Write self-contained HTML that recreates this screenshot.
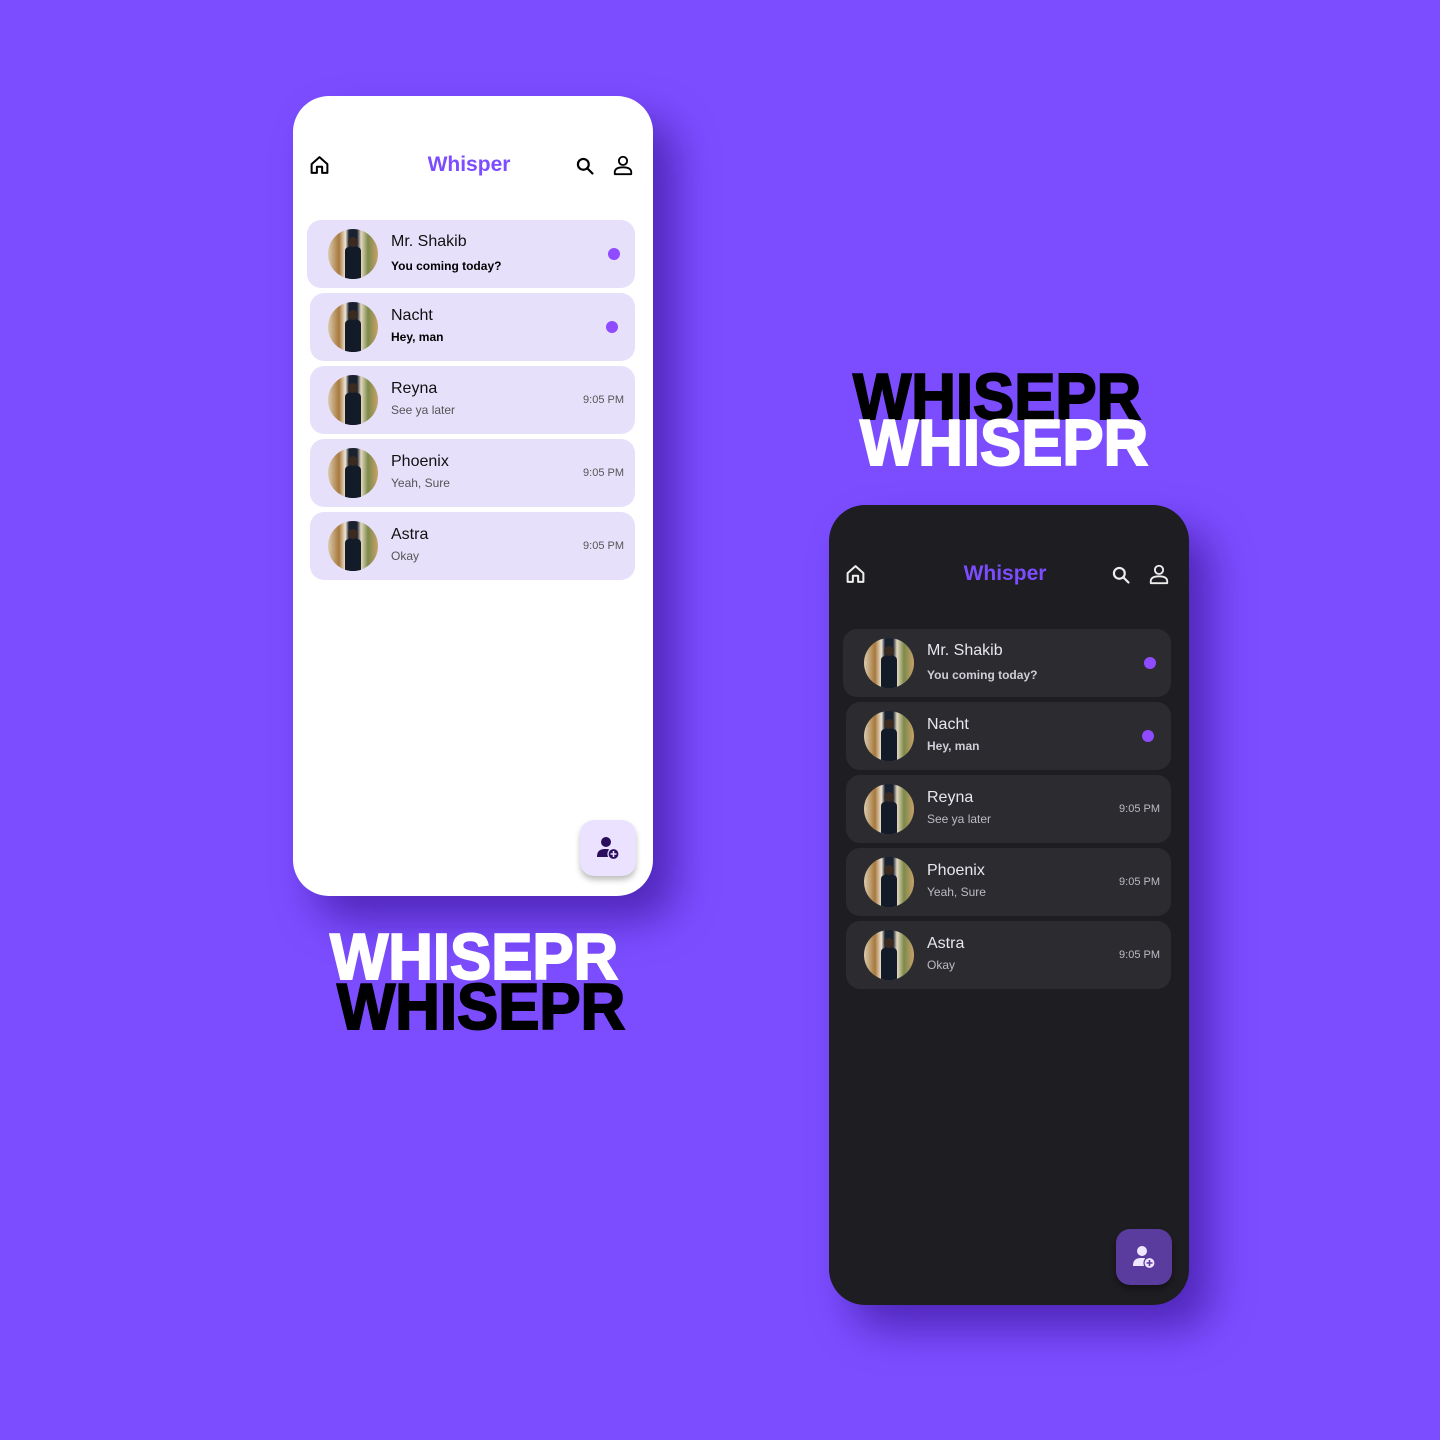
<!DOCTYPE html>
<html><head><meta charset="utf-8"><style>
*{margin:0;padding:0;box-sizing:border-box}
body{width:1440px;height:1440px;background:#7b4dff;position:relative;overflow:hidden;font-family:"Liberation Sans",sans-serif}
.phone{position:absolute;width:360px;height:800px;border-radius:36px;box-shadow:22px 24px 40px rgba(45,10,130,.55)}
.light{left:293px;top:96px;background:#fff;color:#111}
.dark{left:829px;top:505px;background:#1e1d21;color:#e8e6ee}
.ic{position:absolute;top:58px}
.title{position:absolute;left:0;width:352px;top:57px;text-align:center;font-weight:bold;font-size:21px;color:#7c4dff}
.row{position:absolute;left:17px;width:325px;height:68px;border-radius:14px}
.light .row{background:#e7e0fb}
.dark .row{background:#2c2b30}
.row.first{left:14px;width:328px}
.av{position:absolute;left:18px;top:9px;width:50px;height:50px;border-radius:50%;overflow:hidden;
background:linear-gradient(90deg,#d9cbb0 0%,#a7793d 22%,#efe6d6 35%,#1a2230 42%,#1a2230 58%,#e4d8c2 66%,#7d8a4a 80%,#c9a26a 100%)}
.av:after{content:"";position:absolute;left:20px;top:8px;width:10px;height:10px;border-radius:50%;background:#3a2a20}
.av:before{content:"";position:absolute;left:17px;top:18px;width:16px;height:32px;background:#141b28;border-radius:4px 4px 0 0}
.first .av{left:21px}
.nm{position:absolute;left:81px;top:14px;font-size:16px}
.first .nm{left:84px;top:13px}
.sb{position:absolute;left:81px;top:37px;font-size:12px}
.first .sb{left:84px;top:39px}
.b{font-weight:bold}
.light .sb{color:#555}.light .sb.b{color:#000}
.dark .sb{color:#bdbac4}.dark .sb.b{color:#d0cdd6}
.dot{position:absolute;right:17px;top:28px;width:12px;height:12px;border-radius:50%;background:#8f4bff}
.first .dot{right:15px}
.tm{position:absolute;right:11px;top:28px;font-size:11px}
.light .tm{color:#555}.dark .tm{color:#bdbac4}
.fab{position:absolute;left:287px;top:724px;width:56px;height:56px;border-radius:14px;display:flex;align-items:center;justify-content:center}
.light .fab{background:#ebe2ff;box-shadow:0 4px 6px rgba(0,0,0,.25)}
.dark .fab{background:#5a3b9e;box-shadow:0 4px 6px rgba(0,0,0,.35)}
.big{position:absolute;font-size:65px;line-height:65px;font-weight:900;transform:scaleX(.95);transform-origin:0 0;letter-spacing:0}
</style></head><body>

<div class="phone light">
 <svg class="ic" style="left:16px" width="21" height="22" viewBox="0 0 24 24" fill="none" stroke="#000" stroke-width="2.3" stroke-linejoin="round"><path d="M3 11 L12 3 L21 11 V21 H15 V14 H9 V21 H3 Z"/></svg>
 <div class="title">Whisper</div>
 <svg class="ic" style="left:282px;top:60px" width="20" height="20" viewBox="0 0 24 24" fill="none" stroke="#000" stroke-width="2.6" stroke-linecap="round"><circle cx="10" cy="10" r="6.5"/><path d="M15 15 L21 21"/></svg>
 <svg class="ic" style="left:319px" width="22" height="22" viewBox="0 0 24 24" fill="none" stroke="#000" stroke-width="2"><circle cx="12" cy="7.5" r="4.5"/><path d="M3 22 V20 C3 16 7 14.5 12 14.5 C17 14.5 21 16 21 20 V22 Z" stroke-linejoin="round"/></svg>
 <div class="row first" style="top:124px"><div class="av"></div><div class="nm">Mr. Shakib</div><div class="sb b">You coming today?</div><div class="dot"></div></div>
 <div class="row" style="top:197px"><div class="av"></div><div class="nm">Nacht</div><div class="sb b">Hey, man</div><div class="dot"></div></div>
 <div class="row" style="top:270px"><div class="av"></div><div class="nm">Reyna</div><div class="sb">See ya later</div><div class="tm">9:05 PM</div></div>
 <div class="row" style="top:343px"><div class="av"></div><div class="nm">Phoenix</div><div class="sb">Yeah, Sure</div><div class="tm">9:05 PM</div></div>
 <div class="row" style="top:416px"><div class="av"></div><div class="nm">Astra</div><div class="sb">Okay</div><div class="tm">9:05 PM</div></div>
 <div class="fab"><svg width="26" height="26" viewBox="0 0 26 26"><circle cx="11" cy="7" r="5" fill="#2a0d5c"/><path d="M2 22 C2 15 6 14 11 14 C13 14 14 14.3 15 14.8 L15 22 Z" fill="#2a0d5c"/><circle cx="18.5" cy="19" r="5.5" fill="#2a0d5c" stroke="#ebe2ff" stroke-width="1.2"/><path d="M18.5 16 V22 M15.5 19 H21.5" stroke="#ebe2ff" stroke-width="1.6"/></svg></div>
</div>

<div class="phone dark">
 <svg class="ic" style="left:16px" width="21" height="22" viewBox="0 0 24 24" fill="none" stroke="#eee" stroke-width="2.3" stroke-linejoin="round"><path d="M3 11 L12 3 L21 11 V21 H15 V14 H9 V21 H3 Z"/></svg>
 <div class="title">Whisper</div>
 <svg class="ic" style="left:282px;top:60px" width="20" height="20" viewBox="0 0 24 24" fill="none" stroke="#eee" stroke-width="2.6" stroke-linecap="round"><circle cx="10" cy="10" r="6.5"/><path d="M15 15 L21 21"/></svg>
 <svg class="ic" style="left:319px" width="22" height="22" viewBox="0 0 24 24" fill="none" stroke="#eee" stroke-width="2"><circle cx="12" cy="7.5" r="4.5"/><path d="M3 22 V20 C3 16 7 14.5 12 14.5 C17 14.5 21 16 21 20 V22 Z" stroke-linejoin="round"/></svg>
 <div class="row first" style="top:124px"><div class="av"></div><div class="nm">Mr. Shakib</div><div class="sb b">You coming today?</div><div class="dot"></div></div>
 <div class="row" style="top:197px"><div class="av"></div><div class="nm">Nacht</div><div class="sb b">Hey, man</div><div class="dot"></div></div>
 <div class="row" style="top:270px"><div class="av"></div><div class="nm">Reyna</div><div class="sb">See ya later</div><div class="tm">9:05 PM</div></div>
 <div class="row" style="top:343px"><div class="av"></div><div class="nm">Phoenix</div><div class="sb">Yeah, Sure</div><div class="tm">9:05 PM</div></div>
 <div class="row" style="top:416px"><div class="av"></div><div class="nm">Astra</div><div class="sb">Okay</div><div class="tm">9:05 PM</div></div>
 <div class="fab"><svg width="26" height="26" viewBox="0 0 26 26"><circle cx="11" cy="7" r="5" fill="#efe6ff"/><path d="M2 22 C2 15 6 14 11 14 C13 14 14 14.3 15 14.8 L15 22 Z" fill="#efe6ff"/><circle cx="18.5" cy="19" r="5.5" fill="#efe6ff" stroke="#5a3b9e" stroke-width="1.2"/><path d="M18.5 16 V22 M15.5 19 H21.5" stroke="#5a3b9e" stroke-width="1.6"/></svg></div>
</div>

<div class="big" style="left:853px;top:364px;color:#000;-webkit-text-stroke:2px #000">WHISEPR</div>
<div class="big" style="left:860px;top:410px;color:#fff;-webkit-text-stroke:2px #fff;text-shadow:0 0 1px #333">WHISEPR</div>
<div class="big" style="left:330px;top:924px;color:#fff;-webkit-text-stroke:2px #fff">WHISEPR</div>
<div class="big" style="left:337px;top:974px;color:#000;-webkit-text-stroke:2px #000">WHISEPR</div>
</body></html>
